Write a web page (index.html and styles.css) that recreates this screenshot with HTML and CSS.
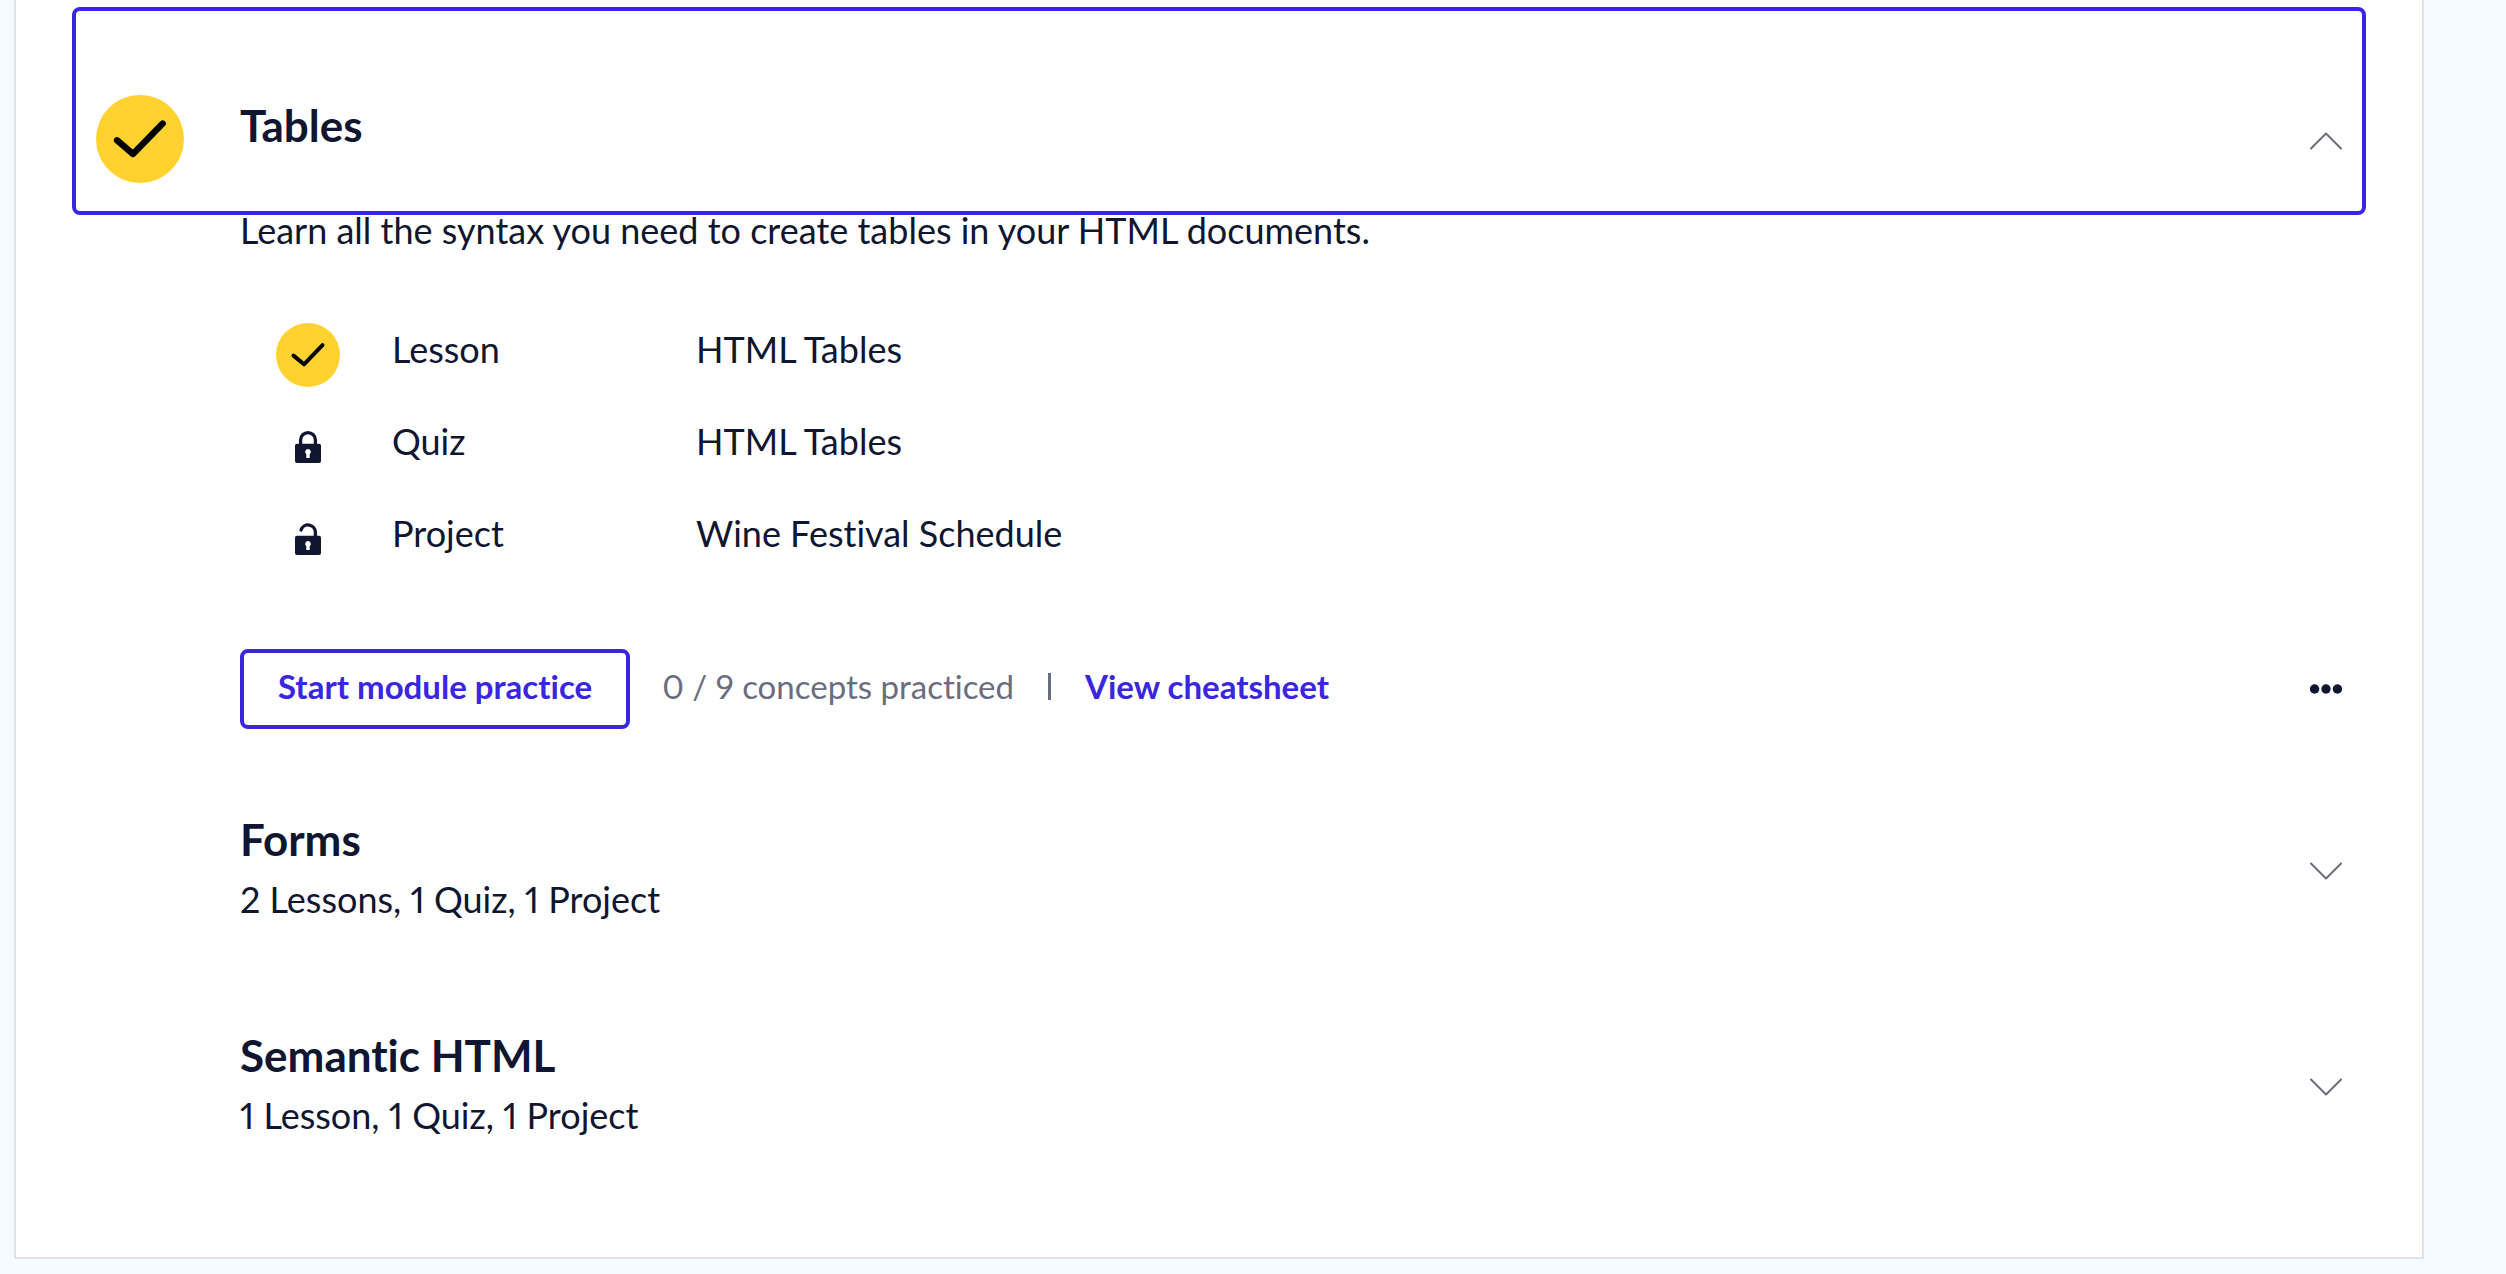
FILE: index.html
```html
<!DOCTYPE html>
<html lang="en">
<head>
<meta charset="utf-8">
<meta name="viewport" content="width=device-width, initial-scale=1">
<title>Syllabus</title>
<link rel="stylesheet" href="styles.css">
</head>
<body>
<main class="card">
  <section class="module">
    <button class="module-header is-open" type="button" aria-expanded="true">
      <svg class="badge" viewBox="0 0 88 88" aria-hidden="true"><circle cx="44" cy="44" r="44" fill="#ffd230"/><path d="M21 45.3 37 59 66.7 28.6" fill="none" stroke="#000" stroke-width="6.4" stroke-linecap="round" stroke-linejoin="round"/></svg>
      <span class="title">Tables</span>
      <svg class="chevron" viewBox="0 0 32 32" aria-hidden="true"><path d="M1 25.5 16 10.5 31 25.5"/></svg>
    </button>
    <div class="panel">
      <p class="description">Learn all the syntax you need to create tables in your HTML documents.</p>
      <ul class="contents">
        <li class="item">
          <svg class="status" viewBox="0 0 64 64" aria-hidden="true"><circle cx="32" cy="32" r="32" fill="#ffd230"/><path d="M17.5 32.6 28 41.3 46.5 22.2" fill="none" stroke="#000" stroke-width="4" stroke-linecap="round" stroke-linejoin="round"/></svg>
          <span>Lesson</span><span>HTML Tables</span>
        </li>
        <li class="item">
          <svg class="status" viewBox="0 0 64 64" aria-hidden="true"><path d="M24.600 30v-5a7.400 7.400 0 0 1 14.800 0v5" fill="none" stroke="#10162f" stroke-width="3.300"/><path fill="#10162f" fill-rule="evenodd" d="M21 28.800h22a2 2 0 0 1 2 2V46a2 2 0 0 1-2 2H21a2 2 0 0 1-2-2V30.800a2 2 0 0 1 2-2zM32 34a2.900 2.900 0 0 0-1.700 5.200V43h3.400v-3.800A2.900 2.900 0 0 0 32 34z"/></svg>
          <span>Quiz</span><span>HTML Tables</span>
        </li>
        <li class="item">
          <svg class="status" viewBox="0 0 64 64" aria-hidden="true"><path d="M25 23a7.400 7.400 0 0 1 14.400 2v5" fill="none" stroke="#10162f" stroke-width="3.300" stroke-linecap="round"/><path fill="#10162f" fill-rule="evenodd" d="M21 28.800h22a2 2 0 0 1 2 2V46a2 2 0 0 1-2 2H21a2 2 0 0 1-2-2V30.800a2 2 0 0 1 2-2zM32 34a2.900 2.900 0 0 0-1.700 5.200V43h3.400v-3.800A2.900 2.900 0 0 0 32 34z"/></svg>
          <span>Project</span><span>Wine Festival Schedule</span>
        </li>
      </ul>
      <div class="actions">
        <button class="practice" type="button">Start module practice</button>
        <div class="meta">
          <span class="progress">0 / 9 concepts practiced</span>
          <span class="divider"></span>
          <a class="cheatsheet" href="#">View cheatsheet</a>
        </div>
        <button class="more" type="button" aria-label="More options">
          <svg viewBox="0 0 32 32" aria-hidden="true"><circle cx="4.600" cy="16" r="4.700"/><circle cx="16" cy="16" r="4.700"/><circle cx="27.400" cy="16" r="4.700"/></svg>
        </button>
      </div>
    </div>
  </section>
  <section class="module">
    <button class="module-header" type="button" aria-expanded="false">
      <span class="summary"><span class="title">Forms</span><span class="counts">2 Lessons, 1 Quiz, 1 Project</span></span>
      <svg class="chevron" viewBox="0 0 32 32" aria-hidden="true"><path d="M1 10.500 16 25.500 31 10.500"/></svg>
    </button>
  </section>
  <section class="module">
    <button class="module-header" type="button" aria-expanded="false">
      <span class="summary"><span class="title">Semantic HTML</span><span class="counts">1 Lesson, 1 Quiz, 1 Project</span></span>
      <svg class="chevron" viewBox="0 0 32 32" aria-hidden="true"><path d="M1 10.500 16 25.500 31 10.500"/></svg>
    </button>
  </section>
</main>
</body>
</html>
```
FILE: styles.css
```css
* { box-sizing: border-box; }

body {
  margin: 0;
  background: #f4fcff;
  color: #10162f;
  font-family: Lato, "Liberation Sans", sans-serif;
  font-size: 36px;
  line-height: 52px;
  font-variant-ligatures: none;
  font-variant-numeric: proportional-nums;
}

button {
  margin: 0;
  border: 0;
  background: none;
  color: inherit;
  font-family: inherit;
  font-size: inherit;
  line-height: inherit;
  font-variant: inherit;
  cursor: pointer;
}

svg { display: block; }

.card {
  margin: 0 82px 0 14px;
  padding: 11px 60px 64px;
  border: 2px solid #e0e3e8;
  border-top: 0;
  background: #fff;
}

.module-header {
  display: grid;
  grid-template-columns: 88px 1fr 32px;
  column-gap: 56px;
  align-items: center;
  width: 100%;
  padding: 48px 20px;
  text-align: left;
}

.module-header.is-open {
  padding: 84px 20px 28px;
  border-radius: 4px;
  outline: 4px solid #3a25e0;
}

.is-open .title { align-self: start; }

.title { display: block; font-size: 44px; font-weight: 700; line-height: 60px; }
.summary { grid-column: 2; }
.counts { display: block; line-height: 60px; }

.badge { width: 88px; height: 88px; }
.chevron { width: 32px; height: 32px; fill: none; stroke: #696d7f; stroke-width: 2; stroke-linecap: round; stroke-linejoin: round; }

.panel { padding: 0 20px 32px 164px; }

.description { margin: 0; line-height: 38px; }

.contents { margin: 60px 0 64px; padding: 0 0 0 36px; list-style: none; }

.item {
  display: grid;
  grid-template-columns: 64px 252px 1fr;
  column-gap: 52px;
  padding: 14px 0;
}

.status { width: 64px; height: 64px; }

.actions { display: flex; align-items: center; gap: 32px; font-size: 33px; }

.practice {
  height: 80px;
  padding: 0 34px 6px;
  border: 4px solid #3a25e0;
  border-radius: 8px;
  color: #3a25e0;
  font-weight: 700;
}

.meta { display: flex; align-items: center; gap: 34px; padding-bottom: 6px; }
.progress { color: #696d7f; }
.divider { width: 3px; height: 27px; background: #696d7f; }
.cheatsheet { color: #3a25e0; font-weight: 700; text-decoration: none; }
.more { margin-left: auto; padding: 0; }
.more svg { width: 32px; height: 32px; fill: #10162f; }
```
